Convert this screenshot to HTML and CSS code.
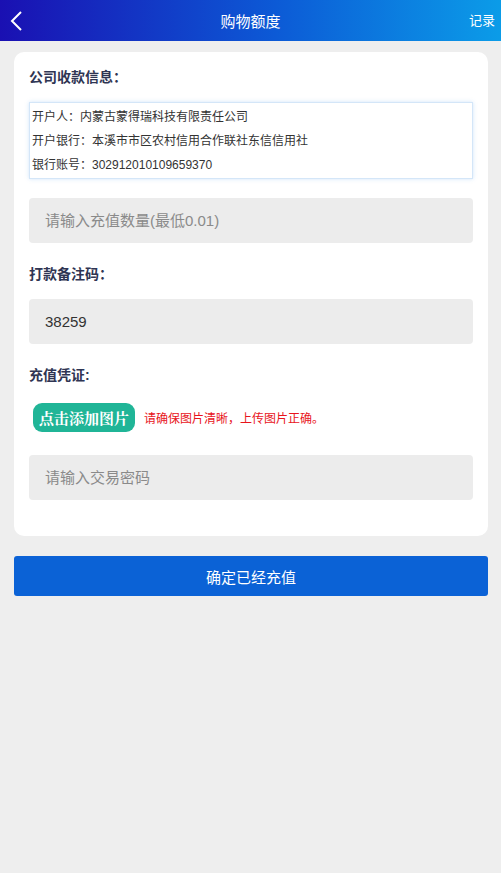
FILE: index.html
```html
<!DOCTYPE html>
<html lang="zh-CN">
<head>
    <meta charset="UTF-8">
    <meta name="viewport" content="width=device-width, initial-scale=1.0">
    <title>购物额度</title>
    <link rel="stylesheet" href="styles.css">
</head>
<body>
    <header class="top-bar">
        <a class="back" href="#">
            <svg width="14" height="20" viewBox="0 0 14 20"><path d="M11 1 L2 10 L11 19" fill="none" stroke="#fff" stroke-width="2"/></svg>
        </a>
        <h1 class="title">购物额度</h1>
        <a class="record" href="#">记录</a>
    </header>

    <div class="card">
        <div class="label">公司收款信息：</div>
        <div class="bank-info">
            <p>开户人：内蒙古蒙得瑞科技有限责任公司</p>
            <p>开户银行：本溪市市区农村信用合作联社东信信用社</p>
            <p>银行账号：302912010109659370</p>
        </div>

        <input class="field" type="text" placeholder="请输入充值数量(最低0.01)">

        <div class="label">打款备注码：</div>
        <input class="field" type="text" value="38259" readonly>

        <div class="label upload-label">充值凭证:</div>
        <div class="upload-row">
            <button type="button" class="upload-btn">点击添加图片</button>
            <span class="upload-tip">请确保图片清晰，上传图片正确。</span>
        </div>

        <input class="field" type="password" placeholder="请输入交易密码">
    </div>

    <button type="button" class="submit">确定已经充值</button>
</body>
</html>
```

FILE: styles.css
```css
* {
    box-sizing: border-box;
}
body {
    margin: 0;
    background: #eeeeee;
    font-family: "Liberation Sans", "Noto Sans CJK SC", sans-serif;
    color: #333;
    min-height: 873px;
}
.top-bar {
    height: 41px;
    display: flex;
    align-items: center;
    justify-content: space-between;
    padding: 0 6px 0 10px;
    background: linear-gradient(90deg, #1a10b2 0%, #0c5ad6 55%, #0b9ce8 100%);
    color: white;
    position: relative;
}
.back {
    display: flex;
    padding-top: 1px;
}
.title {
    position: absolute;
    left: 0;
    right: 0;
    margin: 0;
    text-align: center;
    font-size: 15px;
    font-weight: normal;
    pointer-events: none;
}
.record {
    color: white;
    text-decoration: none;
    font-size: 13px;
    margin-top: -3px;
}
.card {
    margin: 11px 13px 0 14px;
    background: white;
    border-radius: 10px;
    padding: 13px 15px 36px;
}
.label {
    font-size: 14px;
    font-weight: bold;
    color: #2f3553;
    line-height: 24px;
    margin-bottom: 13px;
}
.upload-label {
    margin-bottom: 0;
}
.bank-info {
    border: 1px solid #d4e6f8;
    box-shadow: 0 0 4px rgba(120, 180, 240, 0.35);
    padding: 2px 2px 1px;
    margin-top: 1px;
    margin-bottom: 19px;
}
.bank-info p {
    margin: 0;
    font-size: 12px;
    line-height: 24px;
    color: #333;
}
.field {
    display: block;
    width: 100%;
    height: 45px;
    border: none;
    border-radius: 4px;
    background: #ececec;
    padding: 0 16px;
    font-size: 15px;
    font-family: inherit;
    color: #333;
    margin-bottom: 19px;
    outline: none;
}
.field::placeholder {
    color: #8a8a8a;
}
.upload-row {
    display: flex;
    align-items: center;
    gap: 9px;
    padding-left: 4px;
    margin-top: 16px;
    margin-bottom: 23px;
}
.upload-btn {
    background: #20b597;
    color: white;
    border: none;
    border-radius: 9px;
    height: 29px;
    padding: 0 6px;
    font-size: 15px;
    font-weight: bold;
    font-family: "Liberation Serif", "Noto Serif CJK SC", "Noto Sans CJK SC", serif;
}
.upload-tip {
    color: #e8141c;
    font-size: 12px;
}
.card .field:last-child {
    margin-bottom: 0;
}
.submit {
    display: block;
    width: 474px;
    margin: 20px 0 0 14px;
    height: 40px;
    border: none;
    border-radius: 3px;
    background: #0b62d6;
    color: white;
    font-size: 15px;
    font-family: inherit;
}
```
